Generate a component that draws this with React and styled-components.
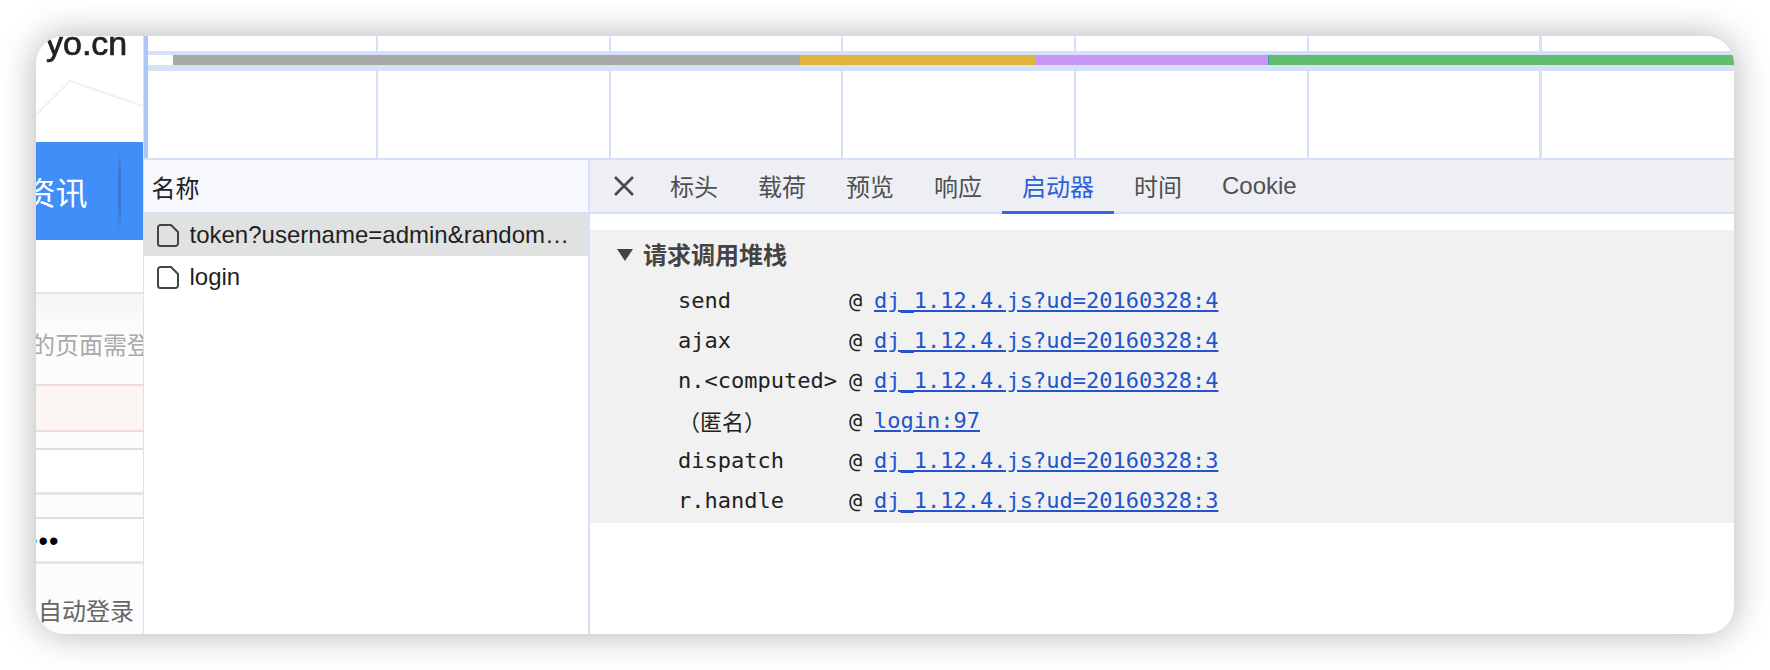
import styled, { createGlobalStyle } from "styled-components";

const GlobalStyle = createGlobalStyle`
  html, body {
    margin: 0;
    padding: 0;
    background: #fff;
  }
  * {
    box-sizing: border-box;
  }
`;

const SANS = `"Liberation Sans", "Noto Sans CJK SC", sans-serif`;
const MONO = `"DejaVu Sans Mono", "Noto Sans CJK SC", monospace`;
const LINE = "#d5e1f8";

const Stage = styled.div`
  width: 1770px;
  height: 670px;
  padding: 36px;
  overflow: hidden;
`;

const Window = styled.div`
  display: flex;
  width: 1698px;
  height: 598px;
  background: #fff;
  border-radius: 28px;
  overflow: hidden;
  box-shadow: 0 0 36px rgba(0, 0, 0, 0.3);
  font-family: ${SANS};
`;

/* the web page, cut off on its left by the devtools */
const PageSide = styled.div`
  width: 106.5px;
  flex: none;
  display: flex;
  flex-direction: column;
  overflow: hidden;
`;

const LogoArea = styled.div`
  position: relative;
  height: 106px;
  flex: none;
  overflow: hidden;
`;

const LogoText = styled.div`
  margin: -13px 0 0 10px;
  font-size: 34px;
  line-height: 40px;
  color: #222;
  -webkit-text-stroke: 0.7px #222;
  white-space: nowrap;
  filter: blur(0.5px);
`;

const LogoLine = styled.svg`
  position: absolute;
  left: 0;
  top: 0;
`;

const NavBar = styled.div`
  height: 98px;
  flex: none;
  display: flex;
  align-items: center;
  justify-content: flex-end;
  background: #408ef8;
  overflow: hidden;
`;

const NavText = styled.span`
  flex: none;
  font-size: 32px;
  color: #fff;
  white-space: nowrap;
`;

const NavDivider = styled.div`
  width: 3px;
  height: 80px;
  flex: none;
  margin: 0 22px 0 30px;
  background: linear-gradient(180deg, #408ef8, #3a76d4 30%, #3a76d4 70%, #408ef8);
`;

const Blank = styled.div`
  height: 52px;
  flex: none;
  background: #fff;
`;

const Notice = styled.div`
  height: 92px;
  flex: none;
  border-top: 2px solid #e4e4e4;
  background: linear-gradient(180deg, #f5f5f5, #fcfcfc 45%);
  display: flex;
  align-items: flex-end;
  padding-bottom: 26px;
  overflow: hidden;
`;

const NoticeText = styled.span`
  margin-left: -5px;
  font-size: 24px;
  line-height: 24px;
  color: #a9a9a9;
  white-space: nowrap;
`;

const ErrorBox = styled.div`
  height: 48px;
  flex: none;
  background: #fbf5f4;
  border-top: 2px solid #f2d8d8;
  border-bottom: 2px solid #f2d8d8;
`;

const Gap = styled.div`
  height: ${({ $h }) => $h}px;
  flex: none;
  background: #fcfcfc;
`;

const Input = styled.div`
  height: 47px;
  flex: none;
  display: flex;
  align-items: center;
  background: #fff;
  border-top: 2px solid #dfdfdf;
  border-bottom: 3px solid #e6e6e6;
  overflow: hidden;
`;

const Dots = styled.span`
  margin: 3px 0 0 -8px;
  font-size: 27px;
  letter-spacing: 1px;
  color: #000;
  white-space: nowrap;
`;

const AutoLogin = styled.div`
  flex: 1;
  background: #fcfcfc;
  display: flex;
  align-items: flex-end;
  padding: 0 0 9px 2px;
  font-size: 24px;
  line-height: 26px;
  color: #666;
  white-space: nowrap;
`;

/* devtools */
const DevTools = styled.div`
  flex: 1;
  min-width: 0;
  display: flex;
  flex-direction: column;
  border-left: 1.5px solid ${LINE};
`;

const Timeline = styled.div`
  height: 124px;
  flex: none;
  display: flex;
  padding-top: 15px;
  border-bottom: 2px solid ${LINE};
`;

const Handle = styled.div`
  width: 4px;
  flex: none;
  margin-top: -15px;
  background: #aec6f6;
`;

const Grid = styled.div`
  flex: 1;
  min-width: 0;
  margin-top: -15px;
  padding-top: 15px;
  background: repeating-linear-gradient(
    90deg,
    transparent 0,
    transparent 228px,
    ${LINE} 228px,
    ${LINE} 230px,
    transparent 230px,
    transparent 232.7px
  );
`;

const Band = styled.div`
  height: 20px;
  padding: 4px 0 6px;
  display: flex;
  background: ${LINE};
`;

const Bar = styled.div`
  height: 10px;
  flex: ${({ $w }) => ($w ? `0 0 ${$w}px` : "1")};
  background: ${({ $color }) => $color};
`;

const Lower = styled.div`
  flex: 1;
  min-height: 0;
  display: flex;
`;

const NameColumn = styled.div`
  width: 446.5px;
  flex: none;
  border-right: 2px solid ${LINE};
`;

const ColumnHead = styled.div`
  height: 54px;
  display: flex;
  align-items: center;
  padding-left: 8px;
  background: #f7f8fd;
  border-bottom: 2px solid ${LINE};
  font-size: 24px;
  color: #222;
`;

const FileRow = styled.div`
  height: 42px;
  display: flex;
  align-items: center;
  gap: 11px;
  padding-left: 13px;
  background: ${({ $selected }) => ($selected ? "#e0e2e1" : "#fff")};
  font-size: 24px;
  color: #1f1f1f;
  white-space: nowrap;
`;

const FileName = styled.span`
  width: 381px;
  overflow: hidden;
  text-overflow: ellipsis;
`;

const Detail = styled.div`
  flex: 1;
  min-width: 0;
  display: flex;
  flex-direction: column;
`;

const TabBar = styled.div`
  height: 54px;
  flex: none;
  display: flex;
  background: #edeff5;
  border-bottom: 2px solid ${LINE};
`;

const CloseButton = styled.div`
  width: 60px;
  flex: none;
  display: flex;
  align-items: center;
  justify-content: center;
  padding-left: 8px;
`;

const Tab = styled.div`
  height: 54px;
  padding: 0 20px;
  display: flex;
  align-items: center;
  font-size: 24px;
  color: ${({ $active }) => ($active ? "#2b5fd9" : "#505050")};
  border-bottom: 3px solid ${({ $active }) => ($active ? "#3367e6" : "transparent")};
`;

const Stack = styled.div`
  margin-top: 16px;
  height: 293px;
  flex: none;
  background: #f1f1f1;
  padding: 10px 0 0 27px;
`;

const StackTitle = styled.div`
  height: 26px;
  display: flex;
  align-items: center;
  gap: 10px;
  margin-bottom: 14px;
  font-size: 24px;
  font-weight: 700;
  color: #444;
`;

const Triangle = styled.div`
  width: 0;
  height: 0;
  margin-top: 4px;
  border-left: 8px solid transparent;
  border-right: 8px solid transparent;
  border-top: 12px solid #444;
`;

const Frame = styled.div`
  height: 40px;
  display: flex;
  align-items: center;
  padding-left: 61px;
  font-family: ${MONO};
  font-size: 22px;
  color: #222;
  white-space: nowrap;
`;

const FrameName = styled.span`
  width: 171px;
  flex: none;
`;

const At = styled.span`
  width: 25px;
  flex: none;
`;

const FrameLink = styled.a`
  color: #2255cc;
  text-decoration: underline;
`;

const frames = [
  { name: "send", link: "dj_1.12.4.js?ud=20160328:4" },
  { name: "ajax", link: "dj_1.12.4.js?ud=20160328:4" },
  { name: "n.<computed>", link: "dj_1.12.4.js?ud=20160328:4" },
  { name: "（匿名）", link: "login:97" },
  { name: "dispatch", link: "dj_1.12.4.js?ud=20160328:3" },
  { name: "r.handle", link: "dj_1.12.4.js?ud=20160328:3" },
];

const tabs = ["标头", "载荷", "预览", "响应", "启动器", "时间", "Cookie"];

const bars = [
  { w: 25, color: "#fff" },
  { w: 627.5, color: "#a9a9a9" },
  { w: 235.5, color: "#e1b43c" },
  { w: 232, color: "#c796f7" },
  { w: 1.5, color: "#3f97c4" },
  { color: "#5fbd6c" },
];

function FileIcon() {
  return (
    <svg width="22" height="23" viewBox="0 0 22 23" fill="none" style={{ flex: "none" }}>
      <path
        d="M1 3.5A2.5 2.5 0 0 1 3.5 1H14l7 7v11.5a2.5 2.5 0 0 1-2.5 2.5h-15A2.5 2.5 0 0 1 1 19.500Z"
        stroke="#444"
        strokeWidth="2"
        strokeLinejoin="round"
      />
    </svg>
  );
}

function App() {
  return (
    <Stage>
      <GlobalStyle />
      <Window>
        <PageSide>
          <LogoArea>
            <LogoText>yo.cn</LogoText>
            <LogoLine width="107" height="106" viewBox="0 0 107 106" fill="none">
              <path d="M0 79 34 45 107 70" stroke="#eaf2fd" strokeWidth="2" />
            </LogoLine>
          </LogoArea>
          <NavBar>
            <NavText>资讯</NavText>
            <NavDivider />
          </NavBar>
          <Blank />
          <Notice>
            <NoticeText>的页面需登录</NoticeText>
          </Notice>
          <ErrorBox />
          <Gap $h={16} />
          <Input />
          <Gap $h={22} />
          <Input>
            <Dots>•••</Dots>
          </Input>
          <AutoLogin>自动登录</AutoLogin>
        </PageSide>
        <DevTools>
          <Timeline>
            <Handle />
            <Grid>
              <Band>
                {bars.map((bar) => (
                  <Bar key={bar.color} $w={bar.w} $color={bar.color} />
                ))}
              </Band>
            </Grid>
          </Timeline>
          <Lower>
            <NameColumn>
              <ColumnHead>名称</ColumnHead>
              <FileRow $selected>
                <FileIcon />
                <FileName>token?username=admin&amp;randomStr=0.123456789</FileName>
              </FileRow>
              <FileRow>
                <FileIcon />
                <FileName>login</FileName>
              </FileRow>
            </NameColumn>
            <Detail>
              <TabBar>
                <CloseButton>
                  <svg width="20" height="20" viewBox="0 0 20 20" fill="none">
                    <path d="M1 1 19 19M19 1 1 19" stroke="#4a4a4a" strokeWidth="2.600" />
                  </svg>
                </CloseButton>
                {tabs.map((tab) => (
                  <Tab key={tab} $active={tab === "启动器"}>
                    {tab}
                  </Tab>
                ))}
              </TabBar>
              <Stack>
                <StackTitle>
                  <Triangle />
                  请求调用堆栈
                </StackTitle>
                {frames.map((frame) => (
                  <Frame key={frame.name}>
                    <FrameName>{frame.name}</FrameName>
                    <At>@</At>
                    <FrameLink>{frame.link}</FrameLink>
                  </Frame>
                ))}
              </Stack>
            </Detail>
          </Lower>
        </DevTools>
      </Window>
    </Stage>
  );
}

export default App;
